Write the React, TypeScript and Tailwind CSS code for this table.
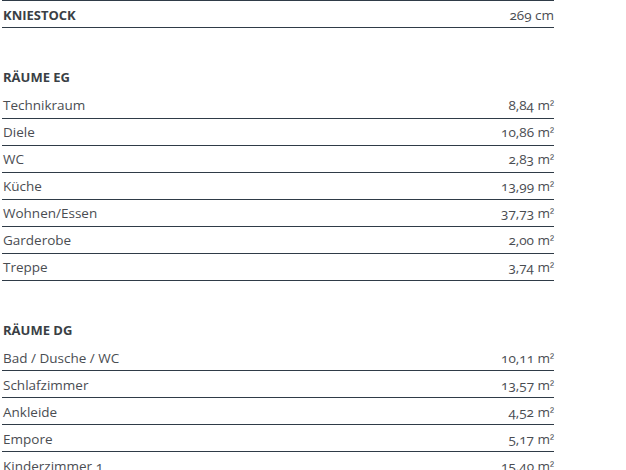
import React from "react";

type Row = { label: string; value: string };

const eg: Row[] = [
  { label: "Technikraum", value: "8,84" },
  { label: "Diele", value: "10,86" },
  { label: "WC", value: "2,83" },
  { label: "Küche", value: "13,99" },
  { label: "Wohnen/Essen", value: "37,73" },
  { label: "Garderobe", value: "2,00" },
  { label: "Treppe", value: "3,74" },
];

const dg: Row[] = [
  { label: "Bad / Dusche / WC", value: "10,11" },
  { label: "Schlafzimmer", value: "13,57" },
  { label: "Ankleide", value: "4,52" },
  { label: "Empore", value: "5,17" },
  { label: "Kinderzimmer 1", value: "15,40" },
];

const Area = ({ value }: { value: string }) => (
  <span>
    {value} m
    <span className="relative -top-[1px] text-[12px]" style={{ fontFamily: "'Liberation Sans', sans-serif" }}>
      ²
    </span>
  </span>
);

const RowLine = ({ label, value }: Row) => (
  <div className="flex h-[27px] items-end justify-between border-b border-[#2f3b47] pb-[2px]">
    <span className="pl-px">{label}</span>
    <Area value={value} />
  </div>
);

const Section = ({ title, rows }: { title: string; rows: Row[] }) => (
  <div className="mt-[40px]">
    <h3 className="pl-px text-[13px] font-bold uppercase text-[#3a3f45]">{title}</h3>
    <div className="mt-[4px]">
      {rows.map((r) => (
        <RowLine key={r.label} {...r} />
      ))}
    </div>
  </div>
);

export default function App() {
  return (
    <div
      className="h-[470px] w-[626px] overflow-hidden bg-white text-[13.5px] text-[#4a4d52] [font-feature-settings:'onum']"
      style={{ fontFamily: "'Open Sans', 'Liberation Sans', sans-serif" }}
    >
      <div className="ml-[2px] w-[552px]">
        <div className="flex h-[28px] items-end justify-between border-y border-[#2f3b47] pb-[2px]">
          <span className="pl-px text-[13px] font-bold text-[#3a3f45]">KNIESTOCK</span>
          <span>269 cm</span>
        </div>
        <Section title="Räume EG" rows={eg} />
        <Section title="Räume DG" rows={dg} />
      </div>
    </div>
  );
}
